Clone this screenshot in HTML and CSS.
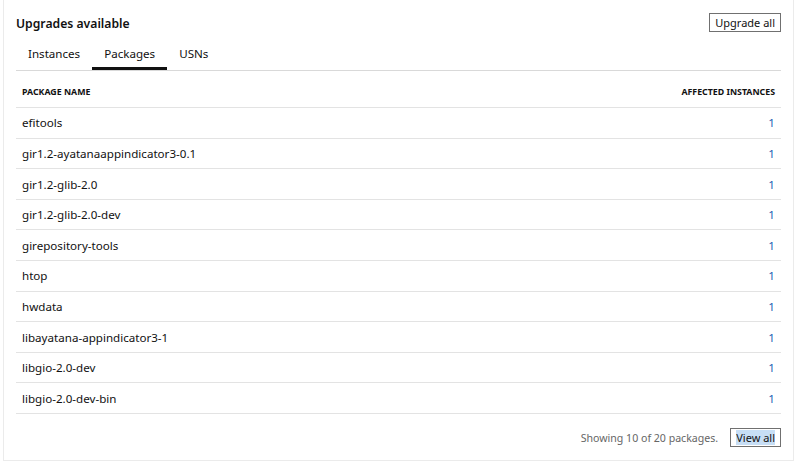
FILE: index.html
```html
<!DOCTYPE html>
<html>
<head>
<meta charset="utf-8">
<link rel="stylesheet" href="styles.css">
</head>
<body>
<div class="card">
  <div class="head">
    <h2 class="title">Upgrades available</h2>
    <button class="btn">Upgrade all</button>
  </div>
  <div class="tabs">
    <span class="tab">Instances</span>
    <span class="tab active">Packages</span>
    <span class="tab">USNs</span>
  </div>
  <table class="tbl">
    <thead>
      <tr><th class="c1">Package name</th><th class="c2">Affected instances</th></tr>
    </thead>
    <tbody>
      <tr><td>efitools</td><td class="num">1</td></tr>
      <tr><td>gir1.2-ayatanaappindicator3-0.1</td><td class="num">1</td></tr>
      <tr><td>gir1.2-glib-2.0</td><td class="num">1</td></tr>
      <tr><td>gir1.2-glib-2.0-dev</td><td class="num">1</td></tr>
      <tr><td>girepository-tools</td><td class="num">1</td></tr>
      <tr><td>htop</td><td class="num">1</td></tr>
      <tr><td>hwdata</td><td class="num">1</td></tr>
      <tr><td>libayatana-appindicator3-1</td><td class="num">1</td></tr>
      <tr><td>libgio-2.0-dev</td><td class="num">1</td></tr>
      <tr><td>libgio-2.0-dev-bin</td><td class="num">1</td></tr>
    </tbody>
  </table>
  <div class="foot">
    <span class="showing">Showing 10 of 20 packages.</span>
    <button class="btn"><span class="sel">View all</span></button>
  </div>
</div>
</body>
</html>
```
FILE: styles.css
```css
html, body { margin: 0; padding: 0; background: #fff; }
body {
  font-family: "Noto Sans", "Open Sans", sans-serif;
  color: #111;
  font-size: 11.6px;
  height: 462px;
  overflow: hidden;
}
.card {
  margin-left: 3px;
  width: 765px;
  height: 460px;
  border: 1px solid #ebebeb;
  border-top: none;
  padding: 0 12px;
  box-sizing: content-box;
}
.head {
  display: flex;
  justify-content: space-between;
  align-items: center;
  padding-top: 13px;
  height: 19px;
}
.title {
  margin: 0;
  font-size: 12.2px;
  font-weight: 600;
  position: relative;
  top: 1px;
}
.btn {
  font-family: inherit;
  font-size: 11px;
  color: #111;
  background: #fff;
  border: 1px solid #707070;
  border-radius: 0;
  height: 19px;
  padding: 0 5px;
  line-height: 16px;
  margin: 0;
}
.tabs {
  display: flex;
  margin-top: 5px;
  height: 33px;
  border-bottom: 1px solid #d9d9d9;
}
.tab {
  display: flex;
  align-items: center;
  padding: 0 12px;
  height: 33px;
  box-sizing: border-box;
  font-size: 11.6px;
}
.tab.active {
  border-bottom: 3px solid #111;
  padding-top: 3px;
}
.tbl {
  width: 100%;
  border-collapse: collapse;
}
.tbl th {
  font-size: 8.8px;
  font-weight: 700;
  text-transform: uppercase;
  height: 36.6px;
  padding: 6px 6px 0;
  border-bottom: 1px solid #e3e3e3;
  box-sizing: border-box;
}
.c1 { text-align: left; }
.c2 { text-align: right; }
.tbl td {
  height: 30.6px;
  padding: 0 6px;
  border-bottom: 1px solid #e3e3e3;
  box-sizing: border-box;
  font-size: 11.6px;
}
.num { text-align: right; color: #1a5fb4; }
.foot {
  display: flex;
  justify-content: flex-end;
  align-items: center;
  padding-top: 14px;
  gap: 12px;
}
.showing { color: #666; font-size: 10.6px; }
.sel { background: #c7def5; }
```
